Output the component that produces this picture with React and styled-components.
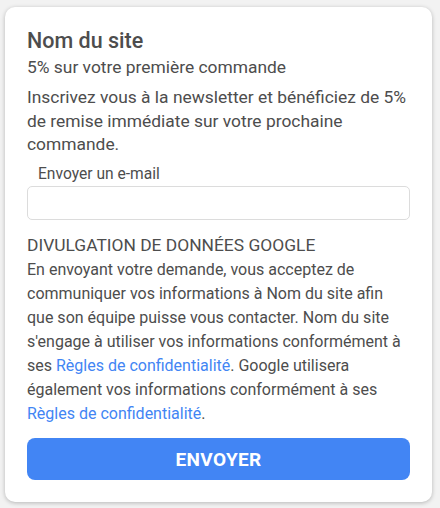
import React from "react";
import styled, { createGlobalStyle } from "styled-components";

const GlobalStyle = createGlobalStyle`
  html, body {
    margin: 0;
    background: #f2f2f2;
  }
  body {
    font-family: Roboto, "Liberation Sans", sans-serif;
  }
`;

const Page = styled.div`
  padding: 7px 8px 6px 5px;
`;

const Card = styled.div`
  width: 427px;
  box-sizing: border-box;
  background: #fff;
  border-radius: 10px;
  box-shadow: 0 1px 4px rgba(0, 0, 0, 0.25);
  padding: 21px 22px 22px 22px;
  color: #4d4d4d;
`;

const Title = styled.h1`
  margin: 0;
  font-size: 21.5px;
  font-weight: 500;
  line-height: 26px;
  color: #4d4d4d;
`;

const Subtitle = styled.p`
  margin: 0;
  font-size: 17.4px;
  line-height: 26px;
`;

const Desc = styled.p`
  margin: 6px 0 0;
  font-size: 17.4px;
  line-height: 23.5px;
`;

const Label = styled.label`
  display: block;
  margin: 7.5px 0 0 11px;
  font-size: 15.6px;
  line-height: 20px;
`;

const Input = styled.input`
  display: block;
  box-sizing: border-box;
  width: 100%;
  height: 34px;
  margin-top: 2px;
  border: 1px solid #dcdcdc;
  border-radius: 5px;
  outline: none;
`;

const Heading = styled.h2`
  margin: 13px 0 0;
  font-size: 17.4px;
  font-weight: 400;
  line-height: 24px;
  color: #4d4d4d;
`;

const Body = styled.p`
  margin: 1px 0 0;
  font-size: 16px;
  line-height: 24px;
`;

const Link = styled.a`
  color: #4285f4;
  text-decoration: none;
`;

const Button = styled.button`
  display: block;
  width: 100%;
  height: 42px;
  margin-top: 12px;
  border: none;
  border-radius: 8px;
  background: #4285f4;
  color: #fff;
  font-family: inherit;
  font-size: 19px;
  font-weight: 700;
  letter-spacing: 0.3px;
`;

export default function App() {
  return (
    <Page>
      <GlobalStyle />
      <Card>
        <Title>Nom du site</Title>
        <Subtitle>5% sur votre première commande</Subtitle>
        <Desc>
          Inscrivez vous à la newsletter et bénéficiez de 5% de remise immédiate sur votre prochaine commande.
        </Desc>
        <Label htmlFor="email">Envoyer un e-mail</Label>
        <Input id="email" type="email" />
        <Heading>DIVULGATION DE DONNÉES GOOGLE</Heading>
        <Body>
          En envoyant votre demande, vous acceptez de communiquer vos informations à Nom du site afin
          que son équipe puisse vous contacter. Nom du site s'engage à utiliser vos informations
          conformément à ses <Link href="#">Règles de confidentialité</Link>. Google utilisera
          également vos informations conformément à ses <Link href="#">Règles de confidentialité</Link>.
        </Body>
        <Button>ENVOYER</Button>
      </Card>
    </Page>
  );
}
